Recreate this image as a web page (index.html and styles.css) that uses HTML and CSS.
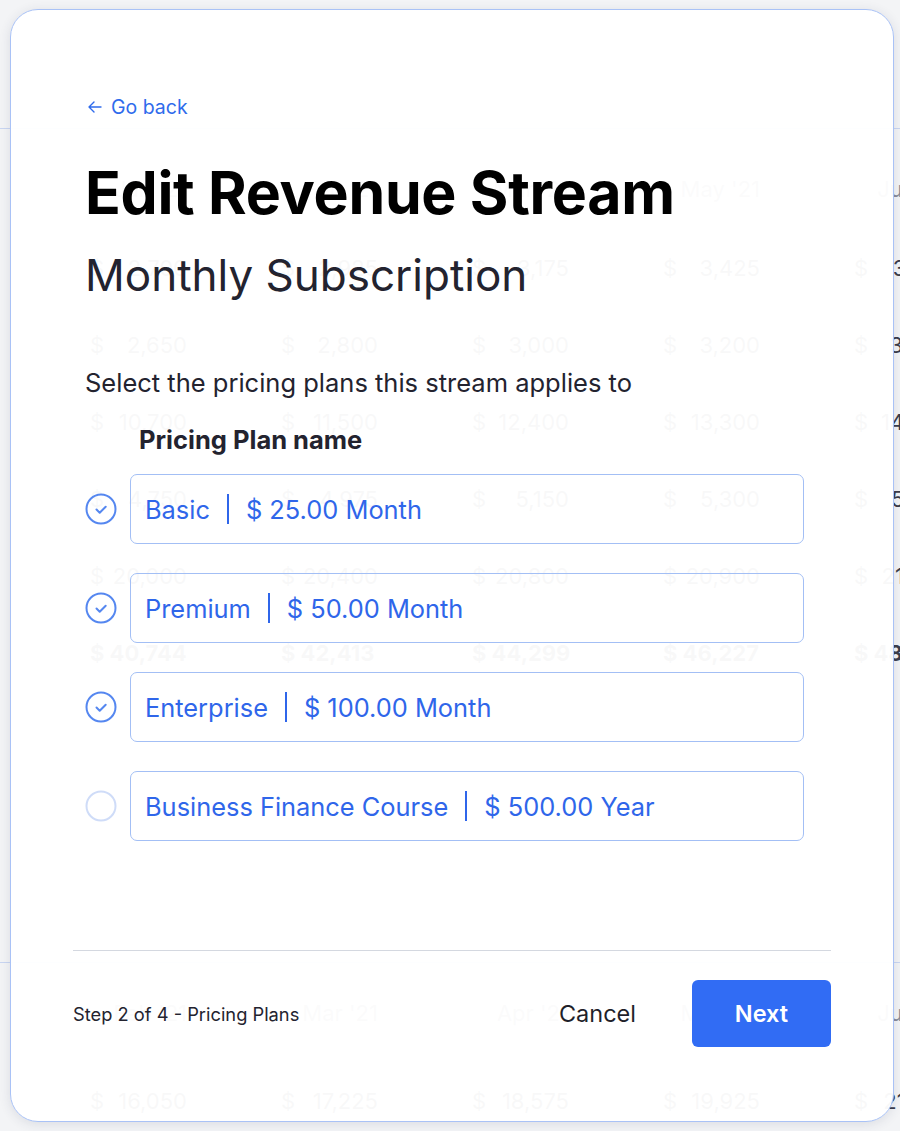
FILE: index.html
```html
<!DOCTYPE html>
<html lang="en">
<head>
  <meta charset="UTF-8">
  <title>Edit Revenue Stream</title>
  <link rel="stylesheet" href="styles.css">
</head>
<body>
  <!-- Hoja de ingresos (detrás del modal) -->
  <div class="sheet">
    <div class="sheet-row head">
      <span class="cell">Jan '21</span>
      <span class="cell">Feb '21</span>
      <span class="cell">Mar '21</span>
      <span class="cell">May '21</span>
      <span class="cell">Jun '21</span>
    </div>
    <div class="sheet-row">
      <span class="cell"><i>$</i>2,700</span>
      <span class="cell"><i>$</i>2,925</span>
      <span class="cell"><i>$</i>3,175</span>
      <span class="cell"><i>$</i>3,425</span>
      <span class="cell"><i>$</i>3,675</span>
    </div>
    <div class="sheet-row">
      <span class="cell"><i>$</i>2,650</span>
      <span class="cell"><i>$</i>2,800</span>
      <span class="cell"><i>$</i>3,000</span>
      <span class="cell"><i>$</i>3,200</span>
      <span class="cell"><i>$</i>3,400</span>
    </div>
    <div class="sheet-row">
      <span class="cell"><i>$</i>10,700</span>
      <span class="cell"><i>$</i>11,500</span>
      <span class="cell"><i>$</i>12,400</span>
      <span class="cell"><i>$</i>13,300</span>
      <span class="cell"><i>$</i>14,200</span>
    </div>
    <div class="sheet-row">
      <span class="cell"><i>$</i>4,750</span>
      <span class="cell"><i>$</i>4,975</span>
      <span class="cell"><i>$</i>5,150</span>
      <span class="cell"><i>$</i>5,300</span>
      <span class="cell"><i>$</i>5,500</span>
    </div>
    <div class="sheet-row">
      <span class="cell"><i>$</i>20,000</span>
      <span class="cell"><i>$</i>20,400</span>
      <span class="cell"><i>$</i>20,800</span>
      <span class="cell"><i>$</i>20,900</span>
      <span class="cell"><i>$</i>21,300</span>
    </div>
    <div class="sheet-row total">
      <span class="cell">$ 40,744</span>
      <span class="cell">$ 42,413</span>
      <span class="cell">$ 44,299</span>
      <span class="cell">$ 46,227</span>
      <span class="cell">$ 48,315</span>
    </div>

    <div class="sheet-row head second">
      <span class="cell">Feb '21</span>
      <span class="cell">Mar '21</span>
      <span class="cell">Apr '21</span>
      <span class="cell">May '21</span>
      <span class="cell">Jun '21</span>
    </div>
    <div class="sheet-row">
      <span class="cell"><i>$</i>16,050</span>
      <span class="cell"><i>$</i>17,225</span>
      <span class="cell"><i>$</i>18,575</span>
      <span class="cell"><i>$</i>19,925</span>
      <span class="cell"><i>$</i>21,275</span>
    </div>
  </div>

  <!-- Modal -->
  <div class="modal">
    <div class="intro">
      <a class="back" href="#">
        <svg width="16" height="14" viewBox="0 0 16 14" fill="none" stroke="currentColor" stroke-width="1.4" stroke-linecap="round" stroke-linejoin="round">
          <path d="M14 7H2M7 2L2 7l5 5"/>
        </svg>
        Go back
      </a>

      <h1 class="title">Edit Revenue Stream</h1>
      <h2 class="subtitle">Monthly Subscription</h2>

      <p class="lead">Select the pricing plans this stream applies to</p>
      <div class="col-head">Pricing Plan name</div>

      <ul class="plans">
        <li class="plan">
          <span class="tick on">
            <svg width="32" height="32" viewBox="0 0 32 32" fill="none" stroke="currentColor" stroke-width="2" stroke-linecap="round" stroke-linejoin="round">
              <circle cx="16" cy="16" r="14.5"/>
              <path d="M11.5 16.5l3.2 3.2 6-6"/>
            </svg>
          </span>
          <div class="plan-box"><span>Basic</span><b class="sep"></b><span>$ 25.00 Month</span></div>
        </li>
        <li class="plan">
          <span class="tick on">
            <svg width="32" height="32" viewBox="0 0 32 32" fill="none" stroke="currentColor" stroke-width="2" stroke-linecap="round" stroke-linejoin="round">
              <circle cx="16" cy="16" r="14.5"/>
              <path d="M11.5 16.5l3.2 3.2 6-6"/>
            </svg>
          </span>
          <div class="plan-box"><span>Premium</span><b class="sep"></b><span>$ 50.00 Month</span></div>
        </li>
        <li class="plan">
          <span class="tick on">
            <svg width="32" height="32" viewBox="0 0 32 32" fill="none" stroke="currentColor" stroke-width="2" stroke-linecap="round" stroke-linejoin="round">
              <circle cx="16" cy="16" r="14.5"/>
              <path d="M11.5 16.5l3.2 3.2 6-6"/>
            </svg>
          </span>
          <div class="plan-box"><span>Enterprise</span><b class="sep"></b><span>$ 100.00 Month</span></div>
        </li>
        <li class="plan">
          <span class="tick">
            <svg width="32" height="32" viewBox="0 0 32 32" fill="none" stroke="currentColor" stroke-width="2">
              <circle cx="16" cy="16" r="14.5"/>
            </svg>
          </span>
          <div class="plan-box"><span>Business Finance Course</span><b class="sep"></b><span>$ 500.00 Year</span></div>
        </li>
      </ul>
    </div>

    <div class="modal-footer">
      <span class="step">Step 2 of 4 - Pricing Plans</span>
      <button class="btn-cancel">Cancel</button>
      <button class="btn-next">Next</button>
    </div>
  </div>
</body>
</html>
```

FILE: styles.css
```css
body {
  margin: 0;
  overflow: hidden;
  background-color: #f3f4f6;
  font-family: Inter, "Noto Sans", sans-serif;
  height: 1131px;
  position: relative;
}

/* Hoja de fondo */
.sheet {
  padding-top: 128px;
}

.sheet-row {
  display: grid;
  grid-template-columns: repeat(5, 97px);
  column-gap: 94px;
  padding-left: 90px;
  height: 77px;
  align-items: center;
  font-size: 22px;
  color: #3b3c4a;
}

.sheet-row.head {
  box-sizing: border-box;
  height: 101px;
  padding-top: 20px;
  border-top: 1px solid #c9d6f2;
  justify-items: end;
  color: #8a8c99;
}

.sheet-row.second {
  margin-top: 271px;
  height: 100px;
  padding-top: 0;
}

.sheet-row.total {
  font-weight: 700;
}

.cell {
  display: flex;
  justify-content: space-between;
  white-space: nowrap;
}

.cell i {
  font-style: normal;
}

/* Modal */
.modal {
  position: absolute;
  top: 9px;
  left: 10px;
  width: 884px;
  height: 1113px;
  box-sizing: border-box;
  display: flex;
  flex-direction: column;
  padding: 86px 62px 74px;
  background: rgba(255, 255, 255, 0.965);
  border: 1px solid #a9c2f6;
  border-radius: 28px;
  box-shadow: 0 2px 12px rgba(40, 50, 80, 0.12);
}

.intro {
  padding-left: 12px;
}

.back {
  display: inline-flex;
  align-items: center;
  gap: 8px;
  margin-left: 2px;
  font-size: 19.5px;
  line-height: 22px;
  color: #2f6bec;
  text-decoration: none;
}

.title {
  margin: 44px 0 0;
  font-size: 59px;
  line-height: 62px;
  font-weight: 700;
  color: #000;
  letter-spacing: -0.3px;
}

.subtitle {
  margin: 27px 0 0;
  font-size: 44px;
  line-height: 48px;
  font-weight: 400;
  color: #23232f;
}

.lead {
  margin: 69px 0 0;
  font-size: 25.5px;
  line-height: 30px;
  color: #23232f;
}

.col-head {
  margin-top: 27px;
  padding-left: 54px;
  font-size: 25.5px;
  line-height: 30px;
  font-weight: 700;
  color: #23232f;
}

.plans {
  list-style: none;
  margin: 19px 0 0;
  padding: 0;
  display: flex;
  flex-direction: column;
  gap: 29px;
}

.plan {
  display: flex;
  align-items: center;
  gap: 13px;
}

.tick {
  display: flex;
  color: #cfdcf8;
}

.tick.on {
  color: #5587f0;
}

.plan-box {
  width: 674px;
  height: 70px;
  box-sizing: border-box;
  display: flex;
  align-items: center;
  padding-left: 14px;
  border: 1.5px solid #a3bff5;
  border-radius: 7px;
  font-size: 25.4px;
  color: #2f66ea;
}

.sep {
  width: 2px;
  height: 30px;
  margin: 0 17px;
  background: #2f66ea;
}

/* Pie */
.modal-footer {
  margin-top: auto;
  display: flex;
  align-items: center;
  padding-top: 29px;
  border-top: 1.5px solid #d4d8e0;
}

.step {
  flex: 1;
  font-size: 18.3px;
  color: #23232f;
}

.btn-cancel {
  margin-right: 56px;
  padding: 0;
  border: none;
  background: none;
  font-family: inherit;
  font-size: 23.5px;
  color: #1f1f2a;
  cursor: pointer;
}

.btn-next {
  width: 139px;
  height: 67px;
  border: none;
  border-radius: 6px;
  background-color: #316cf4;
  color: white;
  font-family: inherit;
  font-size: 23.5px;
  font-weight: 600;
  cursor: pointer;
}
```
